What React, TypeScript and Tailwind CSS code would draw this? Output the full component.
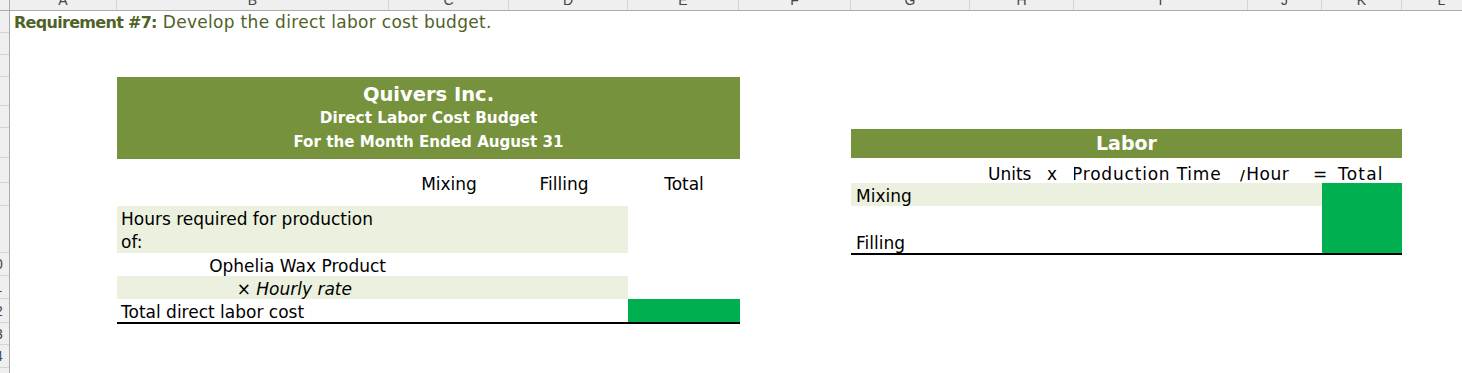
import React from "react";

const cols: { l: string; c: string }[] = [
  { l: "A", c: "w-[107px]" },
  { l: "B", c: "w-[272px]" },
  { l: "C", c: "w-[120px]" },
  { l: "D", c: "w-[119px]" },
  { l: "E", c: "w-[111px]" },
  { l: "F", c: "w-[112px]" },
  { l: "G", c: "w-[119px]" },
  { l: "H", c: "w-[104px]" },
  { l: "I", c: "w-[174px]" },
  { l: "J", c: "w-[74px]" },
  { l: "K", c: "w-[80px]" },
  { l: "L", c: "w-[80px]" },
];

const rows: { n: number; c: string }[] = [
  { n: 1, c: "h-[22px]" },
  { n: 2, c: "h-[22px]" },
  { n: 3, c: "h-[22px]" },
  { n: 4, c: "h-[29px]" },
  { n: 5, c: "h-[22px]" },
  { n: 6, c: "h-[30px]" },
  { n: 7, c: "h-[25px]" },
  { n: 8, c: "h-[23px]" },
  { n: 9, c: "h-[47px]" },
  { n: 10, c: "h-[23px]" },
  { n: 11, c: "h-[23px]" },
  { n: 12, c: "h-[24px]" },
  { n: 13, c: "h-[22px]" },
  { n: 14, c: "h-[23px]" },
  { n: 15, c: "h-[23px]" },
];

export default function App() {
  return (
    <div className="w-[1462px] h-[373px] overflow-hidden bg-white flex flex-col font-['DejaVu_Sans',sans-serif] text-black">
      {/* column header */}
      <div className="flex h-[11px] shrink-0 bg-[#efefef] border-b border-[#ababab] font-['Liberation_Sans',sans-serif] text-[14px] text-[#444]">
        <div className="w-[10px] h-[10px] shrink-0 border-r border-[#ababab]" />
        {cols.map((c) => (
          <div key={c.l} className={`${c.c} h-[10px] shrink-0 overflow-hidden border-r border-[#d4d4d4]`}>
            <div className="h-[20px] -mt-[10px] leading-[20px] text-center">{c.l}</div>
          </div>
        ))}
      </div>

      <div className="flex flex-1">
        {/* row header */}
        <div className="w-[10px] shrink-0 bg-[#efefef] border-r border-[#ababab] flex flex-col font-['Liberation_Sans',sans-serif] text-[14px] text-[#444]">
          {rows.map((r) => (
            <div key={r.n} className={`${r.c} shrink-0 overflow-hidden flex items-center border-b border-[#d4d4d4]`}>
              <span className="w-[28px] shrink-0 -ml-[19px] text-center leading-none">{r.n}</span>
            </div>
          ))}
        </div>

        {/* sheet */}
        <div className="flex-1 flex flex-col">
          <div className="h-[22px] flex items-center pl-[4px] pt-[1px] whitespace-nowrap text-[#4F6228] text-[17px] tracking-[0.3px]">
            <span className="font-bold text-[16px] tracking-[-0.7px]">Requirement #7:</span>
            <span className="ml-[6px]">Develop the direct labor cost budget.</span>
          </div>
          <div className="h-[44px]" />

          <div className="flex items-start pl-[107px] text-[17px]">
            {/* left table */}
            <div className="w-[623px] shrink-0 flex flex-col">
              <div className="h-[82px] bg-[#76923C] text-white font-bold flex flex-col items-center pt-[6px] whitespace-nowrap">
                <div className="text-[19.5px] leading-[24px]">Quivers Inc.</div>
                <div className="text-[15.3px] leading-[23px]">Direct Labor Cost Budget</div>
                <div className="text-[15.1px] leading-[25px]">For the Month Ended August 31</div>
              </div>
              <div className="grid grid-cols-[272px_120px_119px_112px] h-[47px] items-center pt-[4px]">
                <div />
                <div className="text-center">Mixing</div>
                <div className="text-center pr-[9px]">Filling</div>
                <div className="text-center">Total</div>
              </div>
              <div className="grid grid-cols-[272px_120px_119px_112px] h-[47px]">
                <div className="bg-[#EBF1DE] pl-[4px] pt-[2px] leading-[22.5px]">Hours required for production of:</div>
                <div className="bg-[#EBF1DE]" />
                <div className="bg-[#EBF1DE]" />
                <div />
              </div>
              <div className="grid grid-cols-[272px_120px_119px_112px] h-[23px]">
                <div className="text-right pr-[3px] pt-[4px] leading-[19px] whitespace-nowrap">Ophelia Wax Product</div>
                <div />
                <div />
                <div />
              </div>
              <div className="grid grid-cols-[272px_120px_119px_112px] h-[23px]">
                <div className="bg-[#EBF1DE] text-right pr-[37px] pt-[4px] leading-[19px] whitespace-nowrap">
                  × <span className="italic">Hourly rate</span>
                </div>
                <div className="bg-[#EBF1DE]" />
                <div className="bg-[#EBF1DE]" />
                <div />
              </div>
              <div className="grid grid-cols-[272px_120px_119px_112px] h-[25px] border-b-2 border-black">
                <div className="pl-[4px] pt-[4px] leading-[19px] whitespace-nowrap">Total direct labor cost</div>
                <div />
                <div />
                <div className="bg-[#00B050]" />
              </div>
            </div>

            {/* right table */}
            <div className="ml-[111px] mt-[52px] w-[551px] shrink-0 flex flex-col">
              <div className="h-[29px] bg-[#76923C] text-white font-bold text-[19px] flex items-center justify-center">
                Labor
              </div>
              <div className="h-[25px] grid grid-cols-[137px_59px_27px_166px_73px_25px_64px] items-center pt-[4px] whitespace-nowrap">
                <div />
                <div>Units</div>
                <div>x</div>
                <div className="overflow-hidden">
                  <span className="block -ml-[2px] tracking-[0.8px]">Production Time</span>
                </div>
                <div className="tracking-[0.5px]">
                  <span className="inline-block [clip-path:inset(8px_0_0_0)]">/</span>Hour
                </div>
                <div>=</div>
                <div className="tracking-[1.2px]">Total</div>
              </div>
              <div className="flex border-b-2 border-black">
                <div className="w-[471px] flex flex-col">
                  <div className="h-[23px] bg-[#EBF1DE] pl-[5px] pt-[4px] leading-[19px]">Mixing</div>
                  <div className="h-[47px] pl-[5px] flex items-end">
                    <span className="leading-[19px]">Filling</span>
                  </div>
                </div>
                <div className="w-[80px] bg-[#00B050]" />
              </div>
            </div>
          </div>
        </div>
      </div>
    </div>
  );
}
